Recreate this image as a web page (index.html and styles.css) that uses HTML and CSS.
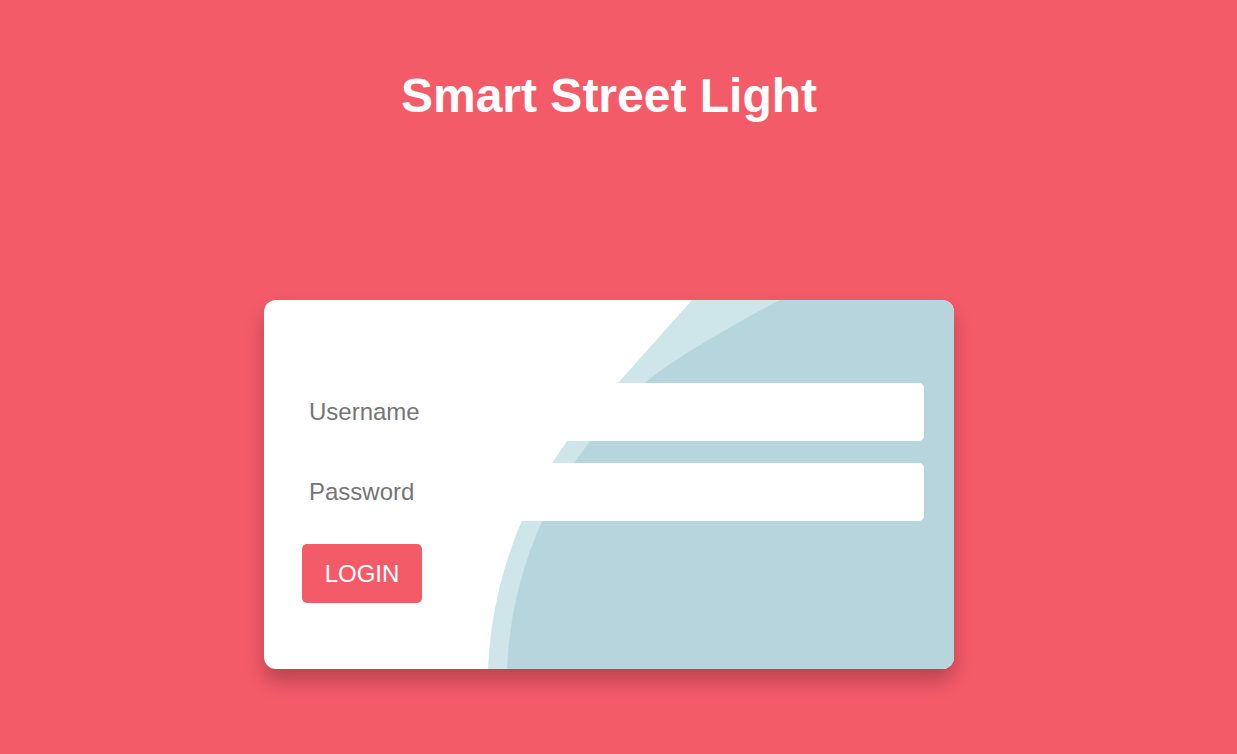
FILE: index.html
```html
<!DOCTYPE html>
<html lang="en">
<head>
<meta charset="utf-8">
<title>Smart Street Light</title>
<link rel="stylesheet" href="styles.css">
</head>
<body>
<main class="page">
  <h1 class="title">Smart Street Light</h1>
  <div class="card">
    <svg class="card-bg" viewBox="0 0 690 369" width="690" height="369" aria-hidden="true">
      <path class="shape-light" d="M428 0 L354 83 A418 418 0 0 0 224 369 L690 369 L690 0 Z"/>
      <path class="shape-dark" d="M516 0 C487 15 409 58 381 83 A401 401 0 0 0 243 369 L690 369 L690 0 Z"/>
    </svg>
    <form class="login-form">
      <input class="field" type="text" placeholder="Username">
      <input class="field" type="password" placeholder="Password">
      <button class="login-btn" type="button">LOGIN</button>
    </form>
  </div>
</main>
</body>
</html>
```
FILE: styles.css
```css
html, body {
  margin: 0;
  padding: 0;
  background: #f45b69;
  font-family: "Liberation Sans", Arial, sans-serif;
}

.page {
  display: flex;
  flex-direction: column;
  align-items: center;
  padding-right: 19px;
  min-height: 754px;
  box-sizing: border-box;
}

.title {
  margin: 68px 0 0;
  font-size: 48px;
  font-weight: bold;
  line-height: normal;
  color: #ffffff;
}

.card {
  position: relative;
  margin-top: 177px;
  width: 690px;
  height: 369px;
  box-sizing: border-box;
  background: #ffffff;
  border-radius: 12px;
  overflow: hidden;
  box-shadow: 0 12px 18px rgba(60, 20, 30, 0.3);
}

.card-bg {
  position: absolute;
  left: 0;
  top: 0;
  display: block;
}

.shape-light {
  fill: #cee5e9;
}

.shape-dark {
  fill: #b7d5dc;
}

.login-form {
  position: relative;
  display: flex;
  flex-direction: column;
  align-items: flex-start;
  padding: 83px 30px 0 30px;
}

.field {
  width: 100%;
  height: 58px;
  box-sizing: border-box;
  border: none;
  border-radius: 5px;
  background: #ffffff;
  padding: 0 15px;
  margin: 0 0 22px;
  font-family: "Liberation Sans", Arial, sans-serif;
  font-size: 24px;
  color: #333333;
  outline: none;
}

.field::placeholder {
  color: #757575;
}

.login-btn {
  margin: 1px 0 0 8px;
  width: 120px;
  height: 59px;
  border: none;
  border-radius: 5px;
  background: #f45b69;
  color: #ffffff;
  font-family: "Liberation Sans", Arial, sans-serif;
  font-size: 24px;
  padding: 0;
  cursor: pointer;
}
```
